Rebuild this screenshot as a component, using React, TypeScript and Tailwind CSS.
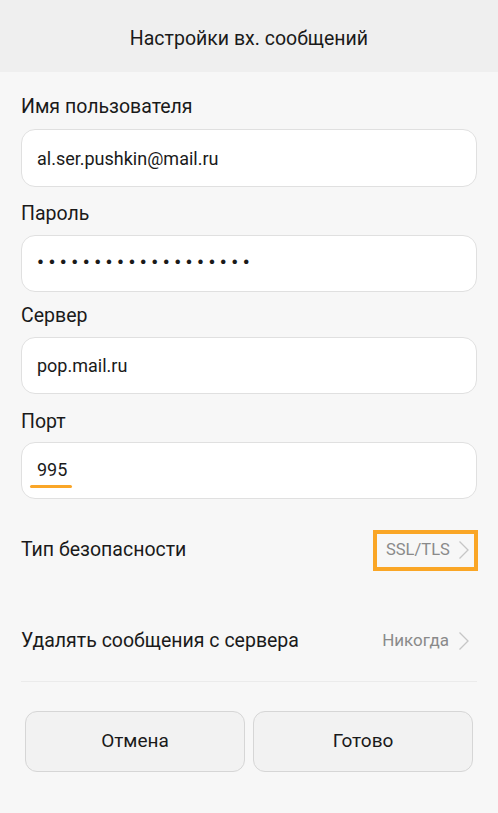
import React from "react";

const Chevron = () => (
  <svg width="12" height="20" viewBox="0 0 12 20" className="shrink-0">
    <path d="M1.5 1.5 L10 10 L1.5 18.5" fill="none" stroke="#c6c6c6" strokeWidth="1.3" />
  </svg>
);

export default function App() {
  const font = { fontFamily: "Roboto, 'Noto Sans', sans-serif" };
  return (
    <div className="w-[498px] h-[813px] bg-[#f7f7f7] text-[#1a1a1a] flex flex-col" style={font}>
      <div className="h-[72px] bg-[#efefef] flex items-center justify-center pt-[6px] text-[19.5px]">
        Настройки вх. сообщений
      </div>
      <div className="px-[21px] flex flex-col">
        <div className="mt-[23px] h-[24px] leading-[24px] text-[19.5px]">Имя пользователя</div>
        <div className="mt-[10px] h-[58px] bg-white border border-[#e0e0e0] rounded-[14px] flex items-center px-[15px] text-[18px]">
          al.ser.pushkin@mail.ru
        </div>
        <div className="mt-[15px] h-[24px] leading-[24px] text-[19.5px]">Пароль</div>
        <div className="mt-[9px] h-[57px] bg-white border border-[#e0e0e0] rounded-[14px] flex items-center px-[15px] text-[19px] font-bold tracking-[4.6px]">
          •••••••••••••••••••
        </div>
        <div className="mt-[12px] h-[24px] leading-[24px] text-[19.5px]">Сервер</div>
        <div className="mt-[9px] h-[57px] bg-white border border-[#e0e0e0] rounded-[14px] flex items-center px-[15px] text-[18px]">
          pop.mail.ru
        </div>
        <div className="mt-[16px] h-[24px] leading-[24px] text-[19.5px]">Порт</div>
        <div className="mt-[8px] h-[57px] bg-white border border-[#e0e0e0] rounded-[14px] flex items-center px-[9px] text-[18px]">
          <span className="relative px-[6px] mt-[-2px]">
            995
            <span className="absolute left-[-1px] right-[1px] bottom-[-5px] h-[3px] rounded-full bg-[#faa628]" />
          </span>
        </div>
        <div className="h-[102px] flex items-center justify-between text-[19.5px]">
          <span>Тип безопасности</span>
          <div className="h-[41px] w-[105px] border-[4px] border-[#faa626] flex items-center pl-[9px] pr-[5px] gap-[8px] mr-[-1px]">
            <span className="text-[16.5px] text-[#8a8a8a]">SSL/TLS</span>
            <Chevron />
          </div>
        </div>
        <div className="h-[80px] flex items-center justify-between text-[19.5px]">
          <span>Удалять сообщения с сервера</span>
          <div className="flex items-center gap-[9px] pr-[7px]">
            <span className="text-[17px] text-[#8a8a8a]">Никогда</span>
            <Chevron />
          </div>
        </div>
        <div className="h-px bg-[#ebebeb]" />
      </div>
      <div className="mt-[29px] px-[25px] flex gap-[8px]">
        <div className="flex-1 h-[61px] rounded-[12px] bg-[#f2f2f2] border border-[#d6d6d6] flex items-center justify-center text-[19px]">
          Отмена
        </div>
        <div className="flex-1 h-[61px] rounded-[12px] bg-[#f2f2f2] border border-[#d6d6d6] flex items-center justify-center text-[19px]">
          Готово
        </div>
      </div>
    </div>
  );
}
